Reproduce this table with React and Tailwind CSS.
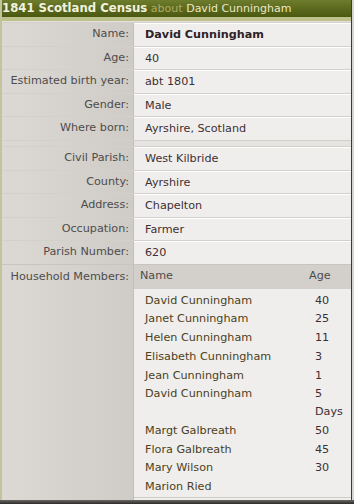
import React from "react";

const details = [
  { label: "Name:", value: "David Cunningham", bold: true },
  { label: "Age:", value: "40" },
  { label: "Estimated birth year:", value: "abt 1801" },
  { label: "Gender:", value: "Male" },
  { label: "Where born:", value: "Ayrshire, Scotland" },
];

const place = [
  { label: "Civil Parish:", value: "West Kilbride" },
  { label: "County:", value: "Ayrshire" },
  { label: "Address:", value: "Chapelton" },
  { label: "Occupation:", value: "Farmer" },
  { label: "Parish Number:", value: "620" },
];

const members = [
  { name: "David Cunningham", age: "40" },
  { name: "Janet Cunningham", age: "25" },
  { name: "Helen Cunningham", age: "11" },
  { name: "Elisabeth Cunningham", age: "3" },
  { name: "Jean Cunningham", age: "1" },
  { name: "David Cunningham", age: "5 Days" },
  { name: "Margt Galbreath", age: "50" },
  { name: "Flora Galbreath", age: "45" },
  { name: "Mary Wilson", age: "30" },
  { name: "Marion Ried", age: "" },
];

const Row = ({ label, value, bold }) => (
  <div className="flex h-[23.6px] border-t border-[#d3d0cb]">
    <div className="w-[132px] shrink-0 text-right pr-[4px] leading-[22px] text-[#4e4c4c] bg-gradient-to-r from-[#dcd9d5] to-[#cfcbc6] border-r border-[#c2beb8] whitespace-nowrap">
      {label}
    </div>
    <div
      className={`flex-1 pl-[11px] leading-[22px] bg-[#f0eeec] border-t border-white ${
        bold ? "font-bold text-[#2e2226]" : "text-[#3d3034]"
      }`}
    >
      {value}
    </div>
  </div>
);

export default function App() {
  return (
    <div
      className="w-[354px] h-[504px] overflow-hidden bg-[#d8d5d0] text-[11.2px]"
      style={{ fontFamily: '"DejaVu Sans", Verdana, sans-serif' }}
    >
      <div className="w-[352px] h-[500px] flex flex-col border-l-2 border-[#c4c49c] border-r border-r-[#3a3a36]">
        {/* title bar */}
        <div className="h-[17px] bg-gradient-to-b from-[#6d7c2c] to-[#4b5810] leading-[17px] whitespace-nowrap overflow-hidden">
          <span className="font-bold text-[11.7px] text-[#f3f1df]">1841 Scotland Census</span>{" "}
          <span className="text-[11px] text-[#b0aa60]">about</span>{" "}
          <span className="text-[11px] text-[#ece8c6]">David Cunningham</span>
        </div>
        <div className="h-[4px] bg-[#bcc08a]" />
        <div className="h-[1px] bg-[#e4e2d6]" />

        {details.map((r) => (
          <Row key={r.label} {...r} />
        ))}

        {/* spacer */}
        <div className="flex h-[6px] border-t border-[#d3d0cb]">
          <div className="w-[132px] shrink-0 bg-gradient-to-r from-[#dcd9d5] to-[#cfcbc6] border-r border-[#c2beb8]" />
          <div className="flex-1 bg-[#e6e4e1]" />
        </div>

        {place.map((r) => (
          <Row key={r.label} {...r} />
        ))}

        {/* household */}
        <div className="flex flex-1 border-t border-[#c8c5c0]">
          <div className="w-[132px] shrink-0 text-right pr-[4px] pt-[3px] leading-[18px] text-[#4e4c4c] bg-gradient-to-r from-[#dcd9d5] to-[#cfcbc6] border-r border-[#c2beb8] whitespace-nowrap">
            Household Members:
          </div>
          <div className="flex-1 flex flex-col">
            <div className="flex h-[24px] leading-[22px] bg-[#d3d0cb] text-[#4e4c4c] pl-[6px]">
              <div className="flex-1">Name</div>
              <div className="w-[42px]">Age</div>
            </div>
            <div className="flex-1 bg-[#f0eeec] pt-[2px] pl-[11px]">
              {members.map((m, i) => (
                <div key={i} className="flex py-[0.6px] leading-[17.6px]">
                  <div className="flex-1 text-[#4a4222]">{m.name}</div>
                  <div className="w-[36px] pr-[4px] text-[#3d3034]">{m.age}</div>
                </div>
              ))}
            </div>
            <div className="h-[3px] bg-[#f0eeec] border-t border-[#cfccc7]" />
          </div>
        </div>
      </div>
      <div className="h-[4px] bg-gradient-to-b from-[#6a6864] to-[#2e2c2a]" />
    </div>
  );
}
